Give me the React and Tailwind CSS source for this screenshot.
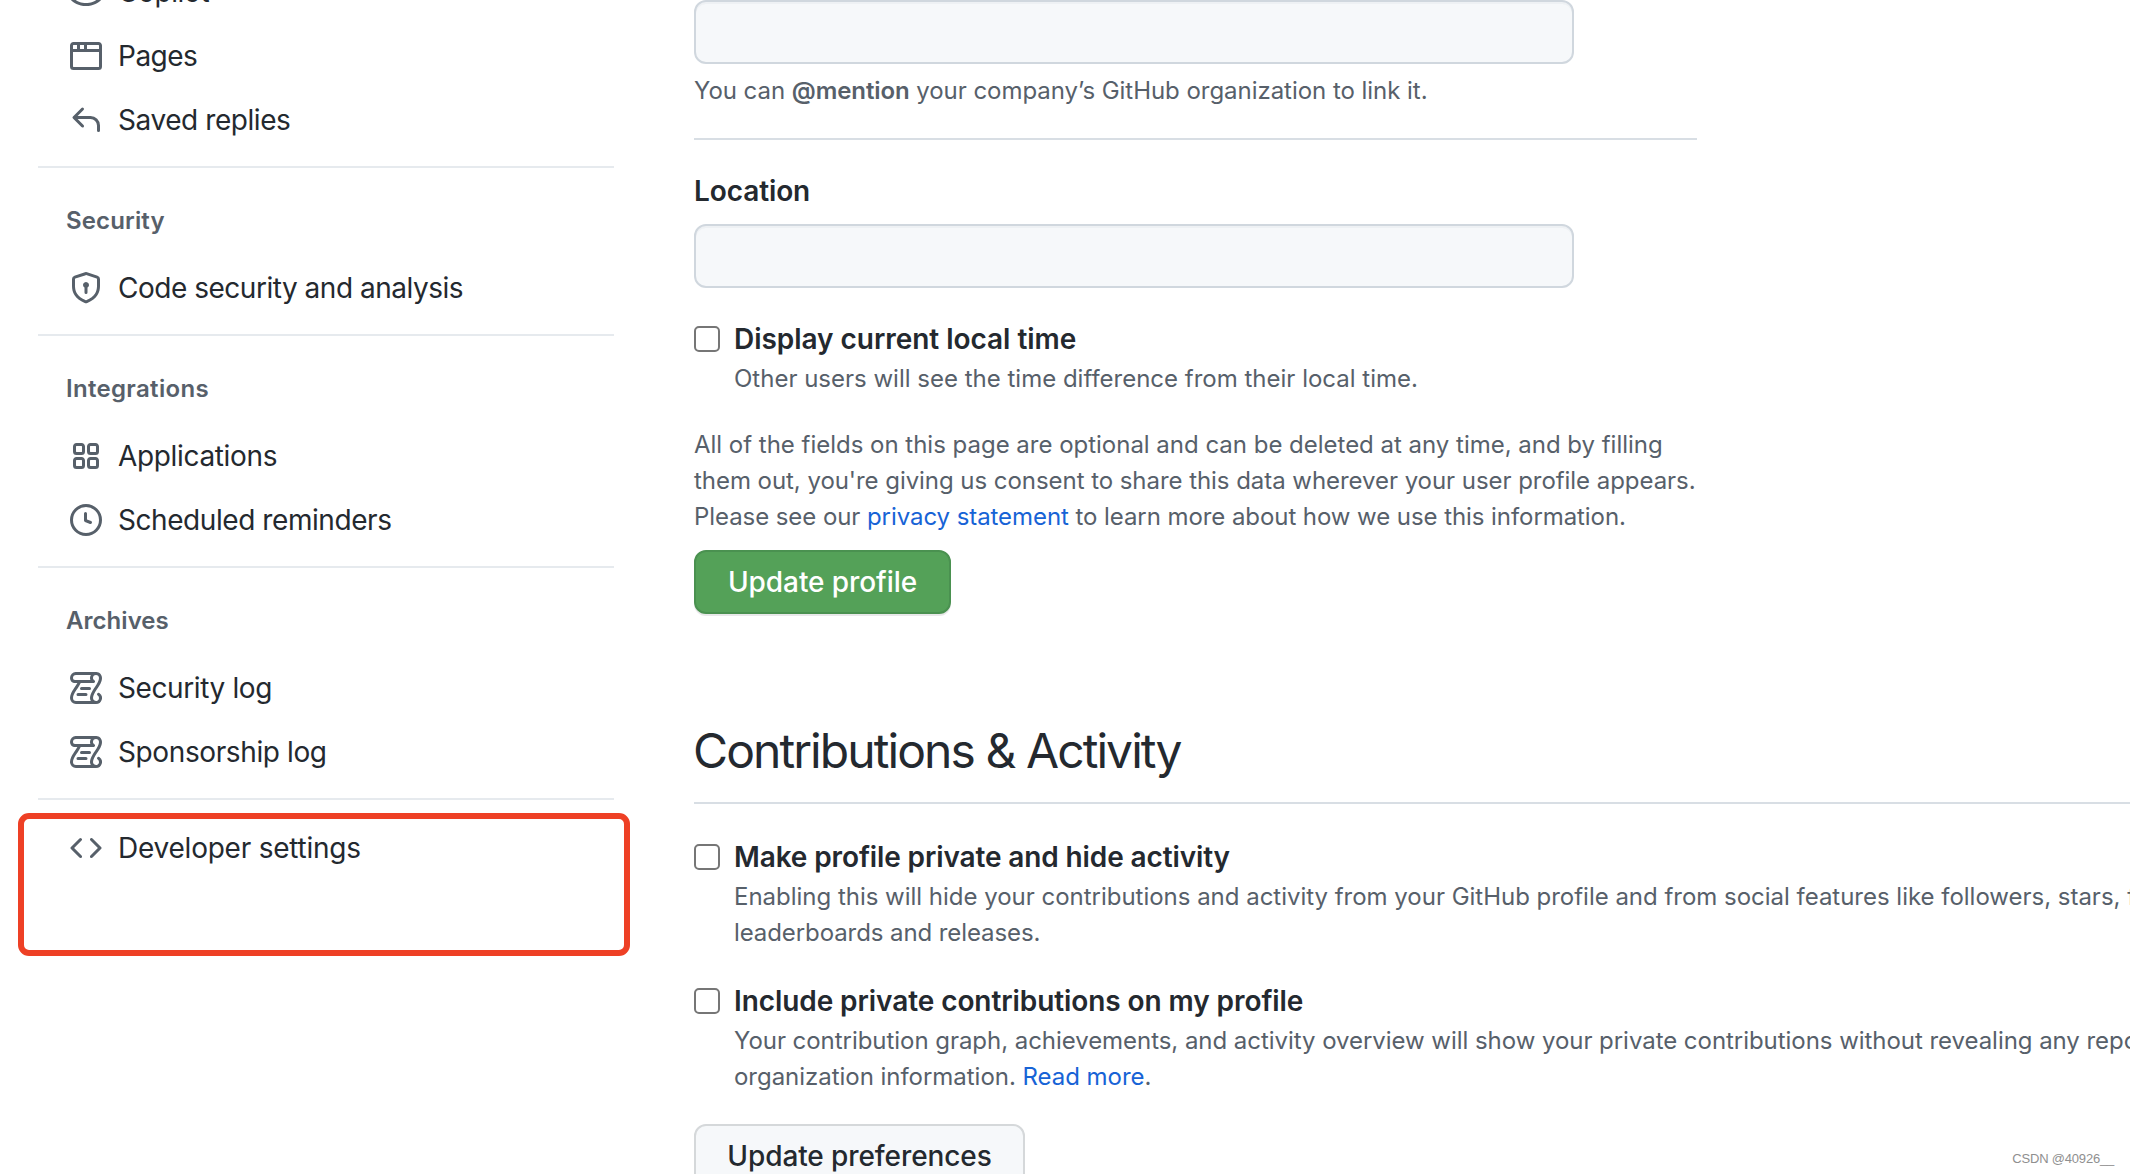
import React from "react";

const ICONS = {
  copilot:
    "M7.998 15.035c-4.562 0-7.873-2.914-7.998-3.749V9.338c.085-.628.677-1.686 1.588-2.065.013-.07.024-.143.036-.218.029-.183.06-.384.126-.612-.201-.508-.254-1.084-.254-1.656 0-.87.128-1.769.693-2.484.579-.733 1.494-1.124 2.724-1.261 1.206-.134 2.262.034 2.944.765.05.053.096.108.139.165.044-.057.094-.112.143-.165.682-.731 1.738-.899 2.944-.765 1.23.137 2.145.528 2.724 1.261.566.715.693 1.614.693 2.484 0 .572-.053 1.148-.254 1.656.066.228.098.429.126.612.012.076.024.148.037.218.924.385 1.522 1.471 1.591 2.095v1.872c0 .766-3.351 3.795-8.002 3.795Zm0-1.485c2.28 0 4.584-1.11 5.002-1.433V7.862l-.023-.116c-.49.21-1.075.291-1.727.291-1.146 0-2.059-.327-2.71-.991A3.222 3.222 0 0 1 8 6.303a3.24 3.24 0 0 1-.544.743c-.65.664-1.563.991-2.71.991-.652 0-1.236-.081-1.727-.291l-.023.116v4.255c.419.323 2.722 1.433 5.002 1.433Z",
  browser:
    "M0 2.75C0 1.784.784 1 1.75 1h12.5c.966 0 1.75.784 1.75 1.75v10.5A1.75 1.75 0 0 1 14.25 15H1.75A1.75 1.75 0 0 1 0 13.25ZM14.5 6h-13v7.25c0 .138.112.25.25.25h12.5a.25.25 0 0 0 .25-.25Zm-6-3.5v2h6V2.75a.25.25 0 0 0-.25-.25ZM5 2.5v2h2v-2Zm-3.25 0a.25.25 0 0 0-.25.25V4.5h2v-2Z",
  reply:
    "M6.78 1.97a.75.75 0 0 1 0 1.06L3.81 6h6.44A4.75 4.75 0 0 1 15 10.75v2.5a.75.75 0 0 1-1.5 0v-2.5a3.25 3.25 0 0 0-3.25-3.25H3.81l2.97 2.97a.749.749 0 0 1-.326 1.275.749.749 0 0 1-.734-.215L1.47 7.28a.75.75 0 0 1 0-1.06l4.25-4.25a.75.75 0 0 1 1.06 0Z",
  shield:
    "m8.533.133 5.25 1.68A1.75 1.75 0 0 1 15 3.48V7c0 1.566-.32 3.182-1.303 4.682-.983 1.498-2.585 2.813-5.032 3.855a1.697 1.697 0 0 1-1.33 0c-2.447-1.042-4.049-2.357-5.032-3.855C1.32 10.182 1 8.566 1 7V3.48a1.755 1.755 0 0 1 1.217-1.667l5.25-1.68a1.748 1.748 0 0 1 1.066 0Zm-.61 1.429.001.001-5.25 1.68a.251.251 0 0 0-.174.237V7c0 1.36.275 2.666 1.057 3.859.784 1.194 2.121 2.342 4.366 3.298a.196.196 0 0 0 .154 0c2.245-.957 3.582-2.103 4.366-3.297C13.225 9.666 13.5 8.358 13.5 7V3.48a.25.25 0 0 0-.174-.238l-5.25-1.68a.25.25 0 0 0-.153 0ZM9.5 6.5c0 .536-.286 1.032-.75 1.3v2.45a.75.75 0 0 1-1.5 0V7.8A1.5 1.5 0 1 1 9.5 6.5Z",
  apps:
    "M1.5 3.25c0-.966.784-1.75 1.75-1.75h2.5c.966 0 1.75.784 1.75 1.75v2.5A1.75 1.75 0 0 1 5.75 7.5h-2.5A1.75 1.75 0 0 1 1.5 5.75Zm7 0c0-.966.784-1.75 1.75-1.75h2.5c.966 0 1.75.784 1.75 1.75v2.5a1.75 1.75 0 0 1-1.75 1.75h-2.5A1.75 1.75 0 0 1 8.5 5.75Zm-7 7c0-.966.784-1.75 1.75-1.75h2.5c.966 0 1.75.784 1.75 1.75v2.5a1.75 1.75 0 0 1-1.75 1.75h-2.5a1.75 1.75 0 0 1-1.75-1.75Zm7 0c0-.966.784-1.75 1.75-1.75h2.5c.966 0 1.75.784 1.75 1.75v2.5a1.75 1.75 0 0 1-1.75 1.75h-2.5a1.75 1.75 0 0 1-1.75-1.75ZM3.25 3a.25.25 0 0 0-.25.25v2.5c0 .138.112.25.25.25h2.5A.25.25 0 0 0 6 5.75v-2.5A.25.25 0 0 0 5.75 3Zm7 0a.25.25 0 0 0-.25.25v2.5c0 .138.112.25.25.25h2.5a.25.25 0 0 0 .25-.25v-2.5a.25.25 0 0 0-.25-.25Zm-7 7a.25.25 0 0 0-.25.25v2.5c0 .138.112.25.25.25h2.5a.25.25 0 0 0 .25-.25v-2.5a.25.25 0 0 0-.25-.25Zm7 0a.25.25 0 0 0-.25.25v2.5c0 .138.112.25.25.25h2.5a.25.25 0 0 0 .25-.25v-2.5a.25.25 0 0 0-.25-.25Z",
  clock:
    "M8 0a8 8 0 1 1 0 16A8 8 0 0 1 8 0ZM1.5 8a6.5 6.5 0 1 0 13 0 6.5 6.5 0 0 0-13 0Zm7-3.25v2.992l2.028.812a.75.75 0 0 1-.557 1.392l-2.5-1A.751.751 0 0 1 7 8.25v-3.5a.75.75 0 0 1 1.5 0Z",
  code:
    "m11.28 3.22 4.25 4.25a.75.75 0 0 1 0 1.06l-4.25 4.25a.749.749 0 0 1-1.275-.326.749.749 0 0 1 .215-.734L13.94 8l-3.72-3.72a.749.749 0 0 1 .326-1.275.749.749 0 0 1 .734.215Zm-6.56 0a.751.751 0 0 1 1.042.018.751.751 0 0 1 .018 1.042L2.06 8l3.72 3.72a.749.749 0 0 1-.326 1.275.749.749 0 0 1-.734-.215L.47 8.53a.75.75 0 0 1 0-1.06Z",
  log:
    "M5 8.25a.75.75 0 0 1 .75-.75h4a.75.75 0 0 1 0 1.5h-4A.75.75 0 0 1 5 8.25ZM4 10.5A.75.75 0 0 0 4 12h4a.75.75 0 0 0 0-1.5H4Z M13-.005c1.654 0 3 1.328 3 3 0 .982-.338 1.933-.783 2.818-.443.879-1.028 1.758-1.582 2.588l-.011.017c-.568.853-1.104 1.659-1.501 2.446-.398.789-.623 1.494-.623 2.136a1.5 1.5 0 1 0 2.333-1.248.75.75 0 0 1 .834-1.246A3 3 0 0 1 13 16H3a3 3 0 0 1-3-3c0-1.582.891-3.135 1.777-4.506.209-.322.418-.637.623-.946.473-.709.923-1.386 1.287-2.048H2.51c-.576 0-1.381-.133-1.907-.783A2.68 2.68 0 0 1 0 2.995a3 3 0 0 1 3-3Zm0 1.5a1.5 1.5 0 0 0-1.5 1.5c0 .476.223.834.667 1.132A.75.75 0 0 1 11.75 5.5H5.368c-.467 1.003-1.141 2.015-1.773 2.963-.192.289-.381.571-.558.845C2.13 10.711 1.5 11.916 1.5 13A1.5 1.5 0 0 0 3 14.5h7.401A2.989 2.989 0 0 1 10 13c0-.979.338-1.928.784-2.812.441-.874 1.023-1.748 1.575-2.576l.017-.026c.568-.853 1.103-1.658 1.501-2.448.398-.79.623-1.497.623-2.143 0-.838-.669-1.5-1.5-1.5Zm-10 0a1.5 1.5 0 0 0-1.5 1.5c0 .321.1.569.27.778.097.12.325.227.74.227h7.674A2.737 2.737 0 0 1 10 2.995c0-.546.146-1.059.401-1.5Z",
};

function NavItem({ icon, label, tracking = "tracking-[-0.39px]" }) {
  return (
    <a className="flex h-16 items-center pl-8">
      <svg viewBox="0 0 16 16" className="size-8 shrink-0 fill-[#57606a]">
        <path d={ICONS[icon]} />
      </svg>
      <span className={`ml-4 text-[28px] leading-10 ${tracking}`}>{label}</span>
    </a>
  );
}

function Divider() {
  return <div className="mt-3.5 h-0.5 bg-[#e6eaee]" />;
}

function GroupTitle({ children, tracking }) {
  return (
    <h3 className={`mt-[35px] mb-[17px] pl-7 text-2xl leading-9 font-semibold text-[#57606a] ${tracking}`}>
      {children}
    </h3>
  );
}

function Sidebar() {
  return (
    <nav className="-mt-10 ml-[38px] w-[576px] shrink-0 whitespace-nowrap">
      <NavItem icon="copilot" label="Copilot" />
      <NavItem icon="browser" label="Pages" tracking="tracking-[-0.5px]" />
      <NavItem icon="reply" label="Saved replies" tracking="tracking-[-0.43px]" />
      <Divider />
      <GroupTitle tracking="tracking-[0.14px]">Security</GroupTitle>
      <NavItem icon="shield" label="Code security and analysis" tracking="tracking-[-0.48px]" />
      <Divider />
      <GroupTitle tracking="tracking-[0.32px]">Integrations</GroupTitle>
      <NavItem icon="apps" label="Applications" tracking="tracking-[-0.34px]" />
      <NavItem icon="clock" label="Scheduled reminders" tracking="tracking-[-0.43px]" />
      <Divider />
      <GroupTitle tracking="tracking-[0.05px]">Archives</GroupTitle>
      <NavItem icon="log" label="Security log" />
      <NavItem icon="log" label="Sponsorship log" />
      <Divider />
      <div className="relative mt-4">
        <NavItem icon="code" label="Developer settings" tracking="tracking-[-0.23px]" />
        {/* Highlight frame around the developer settings entry */}
        <div className="absolute -top-[3px] -left-5 h-[143px] w-[612px] rounded-[11px] border-[6px] border-[#ee4025]" />
      </div>
    </nav>
  );
}

function TextField() {
  return (
    <div className="h-16 w-[880px] rounded-xl border-2 border-[#d0d7de] bg-[#f6f8fa] shadow-[inset_0_2px_0_rgba(208,215,222,0.2)]" />
  );
}

function CheckRow({ label, tracking = "tracking-[-0.04px]", children }) {
  return (
    <div className="flex gap-3.5">
      <span className="mt-2 size-[26px] shrink-0 rounded-[5px] border-2 border-[#767676] bg-white" />
      <div>
        <div className={`text-[28px] leading-[42px] font-semibold ${tracking}`}>{label}</div>
        <p className="-mb-px pt-px text-2xl leading-9 text-[#57606a]">{children}</p>
      </div>
    </div>
  );
}

export default function App() {
  return (
    <div className="relative flex h-[1174px] w-[2130px] overflow-hidden bg-white font-['Inter',sans-serif] text-[#24292f]">
      <Sidebar />
      <main className="ml-20 min-w-0 flex-1 whitespace-nowrap">
        <TextField />
        <p className="mt-[9px] text-2xl leading-9 tracking-[-0.04px] text-[#57606a]">
          You can <b className="font-semibold tracking-[-0.1px]">@mention</b> your company’s GitHub organization to
          link it.
        </p>
        <div className="mt-[29px] h-0.5 w-[1003px] bg-[#d8dee4]" />
        <div className="mt-[30px] mb-3 text-[28px] leading-[42px] font-semibold tracking-[-0.1px]">Location</div>
        <TextField />
        <div className="mt-[30px]">
          <CheckRow label="Display current local time">
            Other users will see the time difference from their local time.
          </CheckRow>
        </div>
        <p className="mt-[31px] text-2xl leading-9 text-[#57606a]">
          <span className="tracking-[-0.015px]">
            All of the fields on this page are optional and can be deleted at any time, and by filling
          </span>
          <br />
          <span className="tracking-[-0.05px]">
            them out, you're giving us consent to share this data wherever your user profile appears.
          </span>
          <br />
          <span className="tracking-[-0.07px]">
            Please see our <a className="text-[#1763d6]">privacy statement</a> to learn more about how we use this
            information.
          </span>
        </p>
        <button className="mt-[15px] block h-16 w-[257px] rounded-xl border-2 border-[#4a9150] bg-[#54a158] text-[28px] font-medium tracking-[-0.08px] text-white shadow-[0_2px_0_rgba(27,31,36,0.1)]">
          Update profile
        </button>

        <h2 className="mt-[101px] border-b-2 border-[#d8dee4] pb-[15px] -indent-px text-[48px] leading-[72px] tracking-[-1.93px]">
          Contributions &amp; Activity
        </h2>
        <div className="mt-8 flex flex-col gap-[30px]">
          <CheckRow label="Make profile private and hide activity" tracking="tracking-[-0.12px]">
            <span className="tracking-[-0.017px]">
              Enabling this will hide your contributions and activity from your GitHub profile and from social features
              like followers, stars, feeds,
            </span>
            <br />
            <span className="tracking-[-0.09px]">leaderboards and releases.</span>
          </CheckRow>
          <CheckRow label="Include private contributions on my profile" tracking="tracking-[-0.08px]">
            <span className="tracking-[-0.045px]">
              Your contribution graph, achievements, and activity overview will show your private contributions without
              revealing any repository or
            </span>
            <br />
            <span className="tracking-[-0.03px]">
              organization information. <a className="text-[#1763d6]">Read more</a>.
            </span>
          </CheckRow>
          <button className="block h-16 w-[331px] rounded-xl border-2 border-[#d5d8da] bg-[#f6f8fa] text-[28px] font-medium tracking-[-0.1px]">
            Update preferences
          </button>
        </div>
      </main>
      <div className="absolute right-[16px] bottom-[7px] font-['Liberation_Sans',sans-serif] text-[13px] leading-4 tracking-[-0.2px] text-[#8f8f8f] [text-shadow:-1px_-1px_0_#ffffff]">
        CSDN @40926__
      </div>
    </div>
  );
}
